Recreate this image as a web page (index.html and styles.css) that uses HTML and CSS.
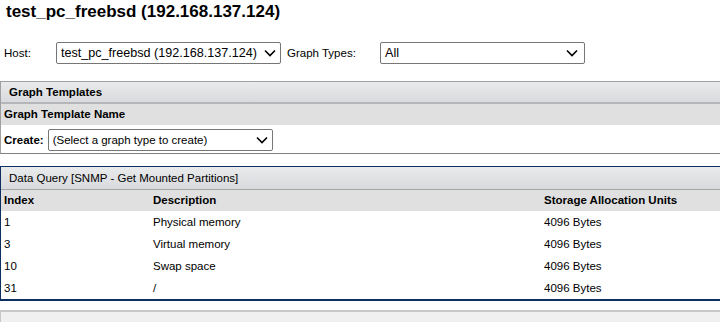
FILE: index.html
```html
<!DOCTYPE html>
<html lang="en">
<head>
    <meta charset="UTF-8">
    <title>New Graphs</title>
    <link rel="stylesheet" href="styles.css">
</head>
<body>
    <h1 class="title">test_pc_freebsd (192.168.137.124)</h1>

    <div class="filter-row">
        <label class="filter-label host-label" for="host">Host:</label>
        <div class="select host-select" id="host">
            <span>test_pc_freebsd (192.168.137.124)</span>
            <svg class="chevron" viewBox="0 0 12 8"><path d="M1 1.5 L6 6.5 L11 1.5" fill="none" stroke="#000" stroke-width="1.6"/></svg>
        </div>
        <label class="filter-label types-label">Graph Types:</label>
        <div class="select type-select">
            <span>All</span>
            <svg class="chevron" viewBox="0 0 12 8"><path d="M1 1.5 L6 6.5 L11 1.5" fill="none" stroke="#000" stroke-width="1.6"/></svg>
        </div>
    </div>

    <div class="panel gray">
        <div class="panel-header"><b>Graph Templates</b></div>
        <div class="col-header">Graph Template Name</div>
        <div class="create-row">
            <b>Create:</b>
            <div class="select create-select">
                <span>(Select a graph type to create)</span>
                <svg class="chevron" viewBox="0 0 12 8"><path d="M1 1.5 L6 6.5 L11 1.5" fill="none" stroke="#000" stroke-width="1.6"/></svg>
            </div>
        </div>
    </div>

    <div class="panel blue">
        <div class="panel-header">Data Query [SNMP - Get Mounted Partitions]</div>
        <table class="query-table">
            <tr class="col-header">
                <th class="c-index">Index</th>
                <th class="c-desc">Description</th>
                <th>Storage Allocation Units</th>
            </tr>
            <tr><td>1</td><td>Physical memory</td><td>4096 Bytes</td></tr>
            <tr><td>3</td><td>Virtual memory</td><td>4096 Bytes</td></tr>
            <tr><td>10</td><td>Swap space</td><td>4096 Bytes</td></tr>
            <tr><td>31</td><td>/</td><td>4096 Bytes</td></tr>
        </table>
    </div>

    <div class="panel gray next">
        <div class="panel-header">&nbsp;</div>
    </div>
</body>
</html>
```

FILE: styles.css
```css
body {
    font-family: "Liberation Sans", Arial, sans-serif;
    font-size: 11.5px;
    color: #000;
    background: #fff;
    margin: 0;
    padding: 0;
}
.title {
    font-size: 17px;
    font-weight: bold;
    margin: 0;
    padding: 2px 0 0 6px;
    height: 21px;
    line-height: 20px;
}
.filter-row {
    display: flex;
    align-items: center;
    margin-top: 19px;
    height: 22px;
}
.filter-label {
    flex: none;
}
.host-label {
    margin-left: 4px;
    width: 52px;
}
.types-label {
    width: 93px;
}
.select {
    display: flex;
    align-items: center;
    justify-content: space-between;
    box-sizing: border-box;
    height: 22px;
    border: 1px solid #767676;
    border-radius: 2px;
    padding: 0 4px 0 4px;
    background: #fff;
    white-space: nowrap;
    flex: none;
}
.chevron {
    width: 12px;
    height: 8px;
    flex: none;
}
.host-select {
    width: 225px;
    margin-right: 6px;
    font-size: 12.6px;
}
.type-select {
    width: 205px;
    padding-right: 6px;
    font-size: 12.6px;
}
.panel {
    border-left: 1px solid #a0a0a0;
    border-top: 1px solid #a0a0a0;
    border-bottom: 1px solid #7f8282;
}
.panel.gray {
    margin-top: 17px;
}
.panel-header {
    height: 20px;
    line-height: 21px;
    padding-left: 8px;
    background: linear-gradient(#e8eaeb, #d9dadd);
    border-bottom: 2px solid #b6b6b8;
}
.col-header {
    background: #e0e0e0;
    font-weight: bold;
    height: 21px;
    line-height: 21px;
    padding-left: 3px;
}
.create-row {
    display: flex;
    align-items: center;
    box-sizing: border-box;
    height: 28px;
    padding: 2px 0 0 3px;
}
.create-row b {
    margin-right: 4px;
}
.create-select {
    width: 225px;
    height: 22px;
}
.panel.blue {
    margin-top: 12px;
    border-left-color: #0d3060;
    border-top-color: #0d3060;
    border-bottom: 2px solid #0d3060;
}
.panel.blue .panel-header {
    height: 22px;
    line-height: 22px;
    border-bottom-width: 1px;
    border-bottom-color: #a5a6a8;
}
.query-table {
    width: 100%;
    border-collapse: collapse;
    border-spacing: 0;
}
.query-table th, .query-table td {
    text-align: left;
    padding: 0 0 0 3px;
    height: 22px;
    line-height: 22px;
}
.query-table th {
    height: 21px;
    line-height: 21px;
}
.query-table .col-header {
    padding: 0;
}
.c-index {
    width: 146px;
}
.c-desc {
    width: 388px;
}
.panel.next {
    margin-top: 9px;
    border-bottom: none;
    border-top: 2px solid #c8c8c8;
    border-left-color: #c8c8c8;
}
.panel.next .panel-header {
    background: #f0f0f0;
    border-bottom: none;
}
```
